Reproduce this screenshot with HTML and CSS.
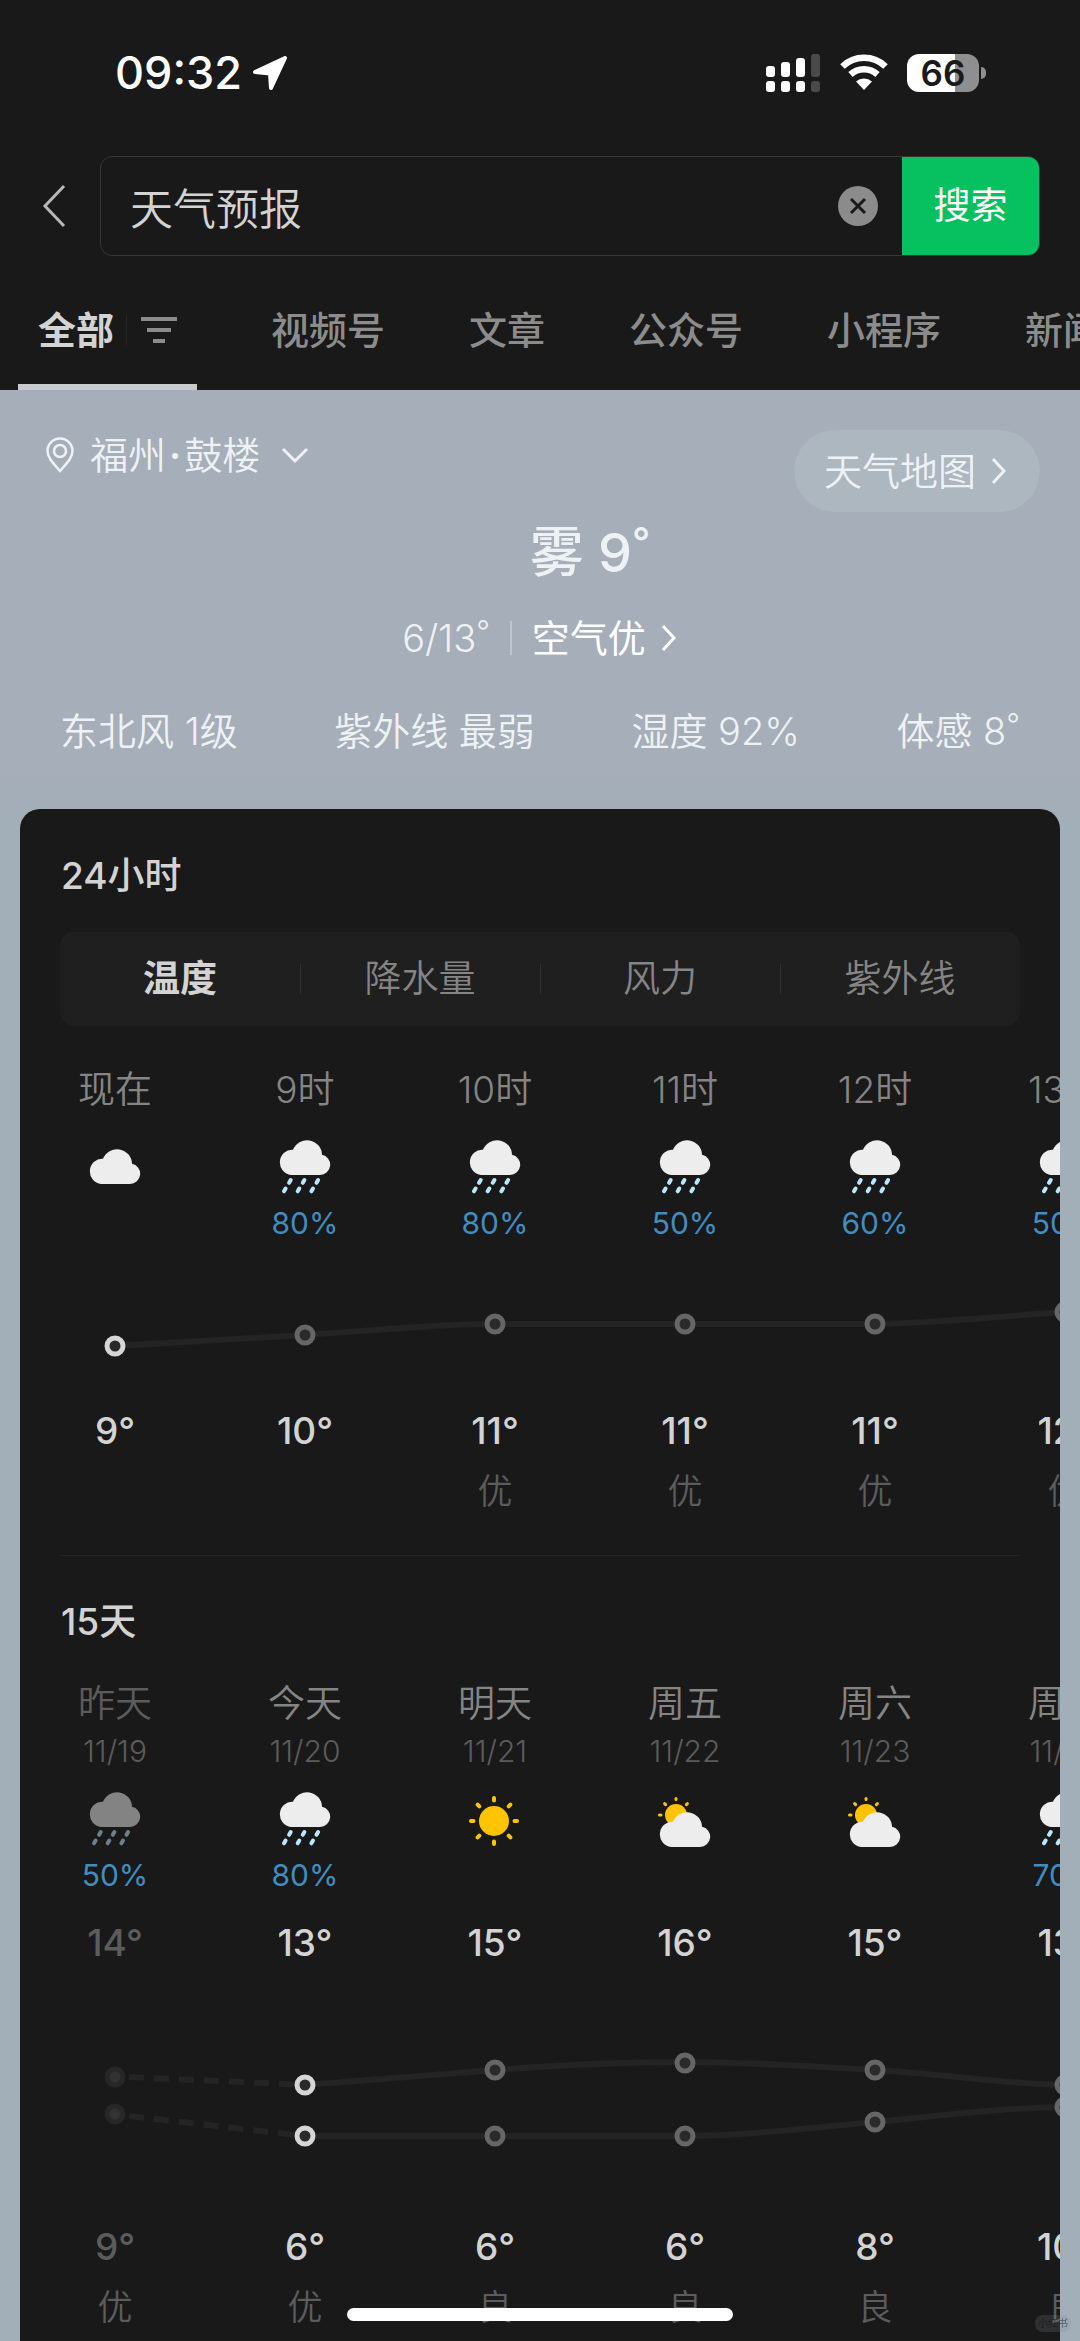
FILE: index.html
```html
<!DOCTYPE html>
<html lang="zh-CN">
<head>
<meta charset="utf-8">
<meta name="viewport" content="width=device-width, initial-scale=1">
<title>天气预报</title>
<link rel="stylesheet" href="styles.css">
</head>
<body>
<svg class="sprite" aria-hidden="true">
  <symbol id="cloud" viewBox="0 0 52 36">
    <path d="M12 36A12 12.500 0 1 1 14 10.800A15 15 0 0 1 43 15.800A10.200 10.200 0 0 1 41 36Z"/>
  </symbol>
  <symbol id="w-cloud" viewBox="0 0 60 68">
    <use href="#cloud" x="4" y="16" width="52" height="36" fill="#ededed"/>
  </symbol>
  <symbol id="w-rain" viewBox="0 0 60 68">
    <use href="#cloud" x="4" y="7" width="52" height="36" fill="#ededed"/>
    <path d="M15.700 48l-1.600 2.800M29.400 48l-1.600 2.800M43.100 48l-1.600 2.800M10.600 56.500l-1.600 2.800M24.300 56.500l-1.600 2.800M38 56.500l-1.600 2.800" stroke="#b8e8fc" stroke-width="4" stroke-linecap="round" fill="none"/>
  </symbol>
  <symbol id="w-sun" viewBox="0 0 60 68">
    <circle cx="29" cy="37" r="15" fill="#ffc300"/>
    <path d="M29 14v2.500M29 57.500v2.500M6 37h2.500M49.500 37h2.500M12.600 20.600l1.700 1.700M43.700 51.700l1.700 1.700M45.400 20.600l-1.700 1.700M14.300 51.700l-1.700 1.700" stroke="#ffc300" stroke-width="4" stroke-linecap="round"/>
  </symbol>
  <symbol id="w-partly" viewBox="0 0 60 68">
    <circle cx="21" cy="31" r="11" fill="#ffc300"/>
    <path d="M21 14.500v1M4.500 31h1.500M9.600 19.600l1 1M32.400 19.600l-1 1" stroke="#ffc300" stroke-width="3" stroke-linecap="round"/>
    <use href="#cloud" x="4" y="27" width="52" height="36" fill="#ededed"/>
  </symbol>
  <symbol id="chev-right" viewBox="0 0 18 30">
    <path d="M3 3l11 12L3 27" fill="none" stroke="currentColor" stroke-width="3"/>
  </symbol>
</svg>

<header class="top">
  <div class="status">
    <div class="status-left">
      <time>09:32</time>
      <svg width="36" height="36" viewBox="0 0 36 36" aria-hidden="true"><path d="M33 3L19 33L18 18.500L3 17Z" fill="#fff" stroke="#fff" stroke-width="4" stroke-linejoin="round"/></svg>
    </div>
    <div class="status-right">
      <svg width="56" height="40" viewBox="0 0 56 40" aria-hidden="true">
        <g fill="#fff"><rect x="1" y="13" width="9" height="11" rx="3"/><rect x="16" y="9" width="9" height="15" rx="3"/><rect x="31" y="5" width="9" height="19" rx="3"/><rect x="1" y="28" width="9" height="11" rx="3"/><rect x="16" y="28" width="9" height="11" rx="3"/><rect x="31" y="28" width="9" height="11" rx="3"/></g>
        <g fill="#4a4a4a"><rect x="46" y="1" width="9" height="23" rx="3"/><rect x="46" y="28" width="9" height="11" rx="3"/></g>
      </svg>
      <svg width="50" height="38" viewBox="0 0 50 38" aria-hidden="true">
        <path d="M3.500 12.500A31 31 0 0 1 46.500 12.500" fill="none" stroke="#fff" stroke-width="6.500"/>
        <path d="M11.500 20.500A20 20 0 0 1 38.500 20.500" fill="none" stroke="#fff" stroke-width="6.500"/>
        <path d="M17 27.500A12 12 0 0 1 33 27.500L25 36Z" fill="#fff"/>
      </svg>
      <div class="battery"><span class="battery-body">66</span><span class="battery-cap"></span></div>
    </div>
  </div>

  <form class="search">
    <button class="back" type="button" aria-label="返回"><svg width="26" height="46" viewBox="0 0 26 46" aria-hidden="true"><path d="M23 3L4 23l19 20" fill="none" stroke="#b8b8b8" stroke-width="3"/></svg></button>
    <div class="search-box">
      <input type="text" value="天气预报" aria-label="搜索内容">
      <button class="clear" type="button" aria-label="清除"><svg width="40" height="40" viewBox="0 0 40 40" aria-hidden="true"><circle cx="20" cy="20" r="20" fill="#8b8b8b"/><path d="M13 13l14 14M27 13L13 27" stroke="#191919" stroke-width="3"/></svg></button>
      <button class="submit" type="submit">搜索</button>
    </div>
  </form>

  <nav class="tabs">
    <a class="tab active" href="#all">全部<span class="tab-rule"></span><svg width="36" height="28" viewBox="0 0 36 28" aria-hidden="true"><path d="M0 3h36M6 14h24M12 25h12" stroke="#8c8c8c" stroke-width="4"/></svg></a>
    <a class="tab" href="#video">视频号</a>
    <a class="tab" href="#article">文章</a>
    <a class="tab" href="#account">公众号</a>
    <a class="tab" href="#mini">小程序</a>
    <a class="tab" href="#news">新闻</a>
  </nav>
</header>

<main class="weather">
  <div class="place-row">
    <button class="place" type="button">
      <svg width="28" height="36" viewBox="0 0 28 36" aria-hidden="true"><path d="M14 34C8 27 1.500 21 1.500 14a12.500 12.500 0 0 1 25 0C26.500 21 20 27 14 34Z" fill="none" stroke="currentColor" stroke-width="2.500"/><circle cx="14" cy="14" r="6" fill="none" stroke="currentColor" stroke-width="2.500"/></svg>
      <span>福州<span class="mid-dot">·</span>鼓楼</span>
      <svg width="28" height="18" viewBox="0 0 28 18" aria-hidden="true"><path d="M2 3l12 12L26 3" fill="none" stroke="currentColor" stroke-width="3"/></svg>
    </button>
    <a class="map" href="#map">天气地图<svg width="18" height="30" aria-hidden="true"><use href="#chev-right"/></svg></a>
  </div>
  <h1 class="now">雾 9<sup>°</sup></h1>
  <p class="summary"><span class="range">6/13<sup>°</sup></span><span class="bar"></span><a class="air" href="#air">空气优<svg width="18" height="30" aria-hidden="true"><use href="#chev-right"/></svg></a></p>
  <ul class="stats"><li>东北风 1级</li><li>紫外线 最弱</li><li>湿度 92%</li><li>体感 8<sup>°</sup></li></ul>

  <div class="card">
    <section class="hourly">
      <h2>24小时</h2>
      <div class="segments">
        <button class="segment on" type="button">温度</button>
        <button class="segment" type="button">降水量</button>
        <button class="segment" type="button">风力</button>
        <button class="segment" type="button">紫外线</button>
      </div>
      <div class="strip">
        <ul class="cols">
          <li><span class="label">现在</span><svg class="icon"><use href="#w-cloud"/></svg><span class="rain"></span></li>
          <li><span class="label">9时</span><svg class="icon"><use href="#w-rain"/></svg><span class="rain">80%</span></li>
          <li><span class="label">10时</span><svg class="icon"><use href="#w-rain"/></svg><span class="rain">80%</span></li>
          <li><span class="label">11时</span><svg class="icon"><use href="#w-rain"/></svg><span class="rain">50%</span></li>
          <li><span class="label">12时</span><svg class="icon"><use href="#w-rain"/></svg><span class="rain">60%</span></li>
          <li><span class="label">13时</span><svg class="icon"><use href="#w-rain"/></svg><span class="rain">50%</span></li>
        </ul>
        <svg class="chart" width="1140" height="160" viewBox="0 0 1140 160" aria-hidden="true">
          <path class="line" d="M95 100L285 89C380 82 430 78 475 78H855C900 78 960 72 1045 66"/>
          <circle class="dot now-dot" cx="95" cy="100" r="8"/><circle class="dot" cx="285" cy="89" r="8"/><circle class="dot" cx="475" cy="78" r="8"/><circle class="dot" cx="665" cy="78" r="8"/><circle class="dot" cx="855" cy="78" r="8"/><circle class="dot" cx="1045" cy="66" r="8"/>
        </svg>
        <ul class="cols">
          <li><span class="temp">9°</span><span class="air-level"></span></li>
          <li><span class="temp">10°</span><span class="air-level"></span></li>
          <li><span class="temp">11°</span><span class="air-level">优</span></li>
          <li><span class="temp">11°</span><span class="air-level">优</span></li>
          <li><span class="temp">11°</span><span class="air-level">优</span></li>
          <li><span class="temp">12°</span><span class="air-level">优</span></li>
        </ul>
      </div>
    </section>
    <hr>
    <section class="daily">
      <h2>15天</h2>
      <div class="strip">
        <ul class="cols">
          <li class="past"><span class="label">昨天</span><span class="date">11/19</span><svg class="icon"><use href="#w-rain"/></svg><span class="rain">50%</span><span class="temp">14°</span></li>
          <li><span class="label">今天</span><span class="date">11/20</span><svg class="icon"><use href="#w-rain"/></svg><span class="rain">80%</span><span class="temp">13°</span></li>
          <li><span class="label">明天</span><span class="date">11/21</span><svg class="icon"><use href="#w-sun"/></svg><span class="rain"></span><span class="temp">15°</span></li>
          <li><span class="label">周五</span><span class="date">11/22</span><svg class="icon"><use href="#w-partly"/></svg><span class="rain"></span><span class="temp">16°</span></li>
          <li><span class="label">周六</span><span class="date">11/23</span><svg class="icon"><use href="#w-partly"/></svg><span class="rain"></span><span class="temp">15°</span></li>
          <li><span class="label">周日</span><span class="date">11/24</span><svg class="icon"><use href="#w-rain"/></svg><span class="rain">70%</span><span class="temp">13°</span></li>
        </ul>
        <svg class="chart" width="1140" height="254" viewBox="0 0 1140 254" aria-hidden="true">
          <path class="line dashed" d="M109 109L285 117"/>
          <path class="line dashed" d="M109 148L285 168"/>
          <path class="line" d="M285 117C340 113 410 107 475 102S610 94 665 94S790 98 855 102S990 116 1045 117"/>
          <path class="line" d="M285 168H665C720 168 790 160 855 154S980 140 1045 139"/>
          <circle class="dot past-dot" cx="95" cy="109" r="8"/><circle class="dot now-dot" cx="285" cy="117" r="8"/><circle class="dot" cx="475" cy="102" r="8"/><circle class="dot" cx="665" cy="95" r="8"/><circle class="dot" cx="855" cy="102" r="8"/><circle class="dot" cx="1045" cy="117" r="8"/>
          <circle class="dot past-dot" cx="95" cy="146" r="8"/><circle class="dot now-dot" cx="285" cy="168" r="8"/><circle class="dot" cx="475" cy="168" r="8"/><circle class="dot" cx="665" cy="168" r="8"/><circle class="dot" cx="855" cy="154" r="8"/><circle class="dot" cx="1045" cy="139" r="8"/>
        </svg>
        <ul class="cols">
          <li class="past"><span class="temp">9°</span><span class="air-level">优</span></li>
          <li><span class="temp">6°</span><span class="air-level">优</span></li>
          <li><span class="temp">6°</span><span class="air-level">良</span></li>
          <li><span class="temp">6°</span><span class="air-level">良</span></li>
          <li><span class="temp">8°</span><span class="air-level">良</span></li>
          <li><span class="temp">10°</span><span class="air-level">良</span></li>
        </ul>
      </div>
    </section>
  </div>
</main>
<div class="home-bar"></div>
<div class="mark">小红书</div>
</body>
</html>
```
FILE: styles.css
```css
* { box-sizing: border-box; }

body {
  margin: 0;
  background: #191919;
  color: #d3d3d3;
  font-family: Inter, "Noto Sans CJK SC", sans-serif;
  font-size: 37px;
  font-weight: 350;
  line-height: 52px;
  overflow-x: hidden;
}

h1, h2, p, ul { margin: 0; padding: 0; }
ul { list-style: none; }
a { color: inherit; text-decoration: none; }
button, input {
  margin: 0;
  padding: 0;
  border: 0;
  background: none;
  color: inherit;
  font: inherit;
}
svg { display: block; flex: none; }
sup { font-size: 30px; line-height: 0; vertical-align: 10px; }
.sprite { position: absolute; width: 0; height: 0; }

/* Status bar */
.status {
  display: flex;
  justify-content: space-between;
  align-items: center;
  height: 146px;
  padding: 0 94px 0 115px;
  color: #fff;
}
.status-left, .status-right { display: flex; align-items: center; }
.status-left { gap: 10px; font-size: 45px; font-weight: 500; }
.status-right { gap: 18px; }
.battery { display: flex; align-items: center; gap: 2px; }
.battery-body {
  width: 72px;
  height: 38px;
  border-radius: 12px;
  background: linear-gradient(90deg, #fff 66%, #8f8f8f 66%);
  color: #191919;
  font-size: 35px;
  font-weight: 600;
  line-height: 38px;
  text-align: center;
}
.battery-cap { width: 5px; height: 12px; border-radius: 0 5px 5px 0; background: #8f8f8f; }

/* Search */
.search { display: flex; align-items: center; padding: 10px 40px 0 41px; }
.back { width: 59px; height: 100px; }
.search-box {
  display: flex;
  align-items: center;
  flex: 1;
  height: 100px;
  border: 1px solid #363636;
  border-radius: 12px;
  overflow: hidden;
}
.search-box input { flex: 1; min-width: 0; height: 98px; padding-left: 29px; outline: 0; font-size: 43px; }
.clear { margin-right: 24px; }
.submit { width: 137px; height: 98px; background: #07c160; color: #fff; font-weight: 400; }

/* Category tabs */
.tabs { display: flex; gap: 44px; padding-left: 18px; font-size: 38px; white-space: nowrap; overflow: hidden; }
.tab {
  display: flex;
  align-items: center;
  flex: none;
  height: 134px;
  padding: 20px 20px 0;
  border-bottom: 6px solid transparent;
  color: #8c8c8c;
  font-weight: 500;
}
.tab.active { border-color: #c9cacb; color: #d3d3d3; font-weight: 700; margin-right: 10px; }
.tab-rule { width: 1px; height: 30px; margin: 0 14px 0 12px; background: #252525; }

/* Current conditions */
.weather {
  padding: 40px 20px 0;
  background: linear-gradient(180deg, #a5aeb9 0, #a5aeb9 380px, #a2aeb8 440px);
  color: #eff2f5;
  font-size: 38px;
}
.place-row { display: flex; justify-content: space-between; align-items: flex-start; padding: 0 20px 0 26px; }
.place { display: flex; align-items: center; gap: 16px; height: 50px; }
.place svg:last-child { margin-left: 5px; }
.mid-dot { margin: 0 3px; font-weight: 600; }
.map {
  display: flex;
  align-items: center;
  gap: 14px;
  height: 82px;
  padding: 0 32px 0 30px;
  border-radius: 41px;
  background: #acb7bf;
}
.now { padding-left: 100px; font-size: 54px; font-weight: 500; line-height: 82px; text-align: center; }
.now sup { font-size: 40px; vertical-align: 16px; }
.summary { display: flex; justify-content: center; align-items: center; height: 60px; margin-top: 14px; }
.bar { width: 2px; height: 34px; margin: 0 20px; background: #bfc6ce; }
.air { display: flex; align-items: center; gap: 14px; color: #fff; font-weight: 400; }
.stats { display: flex; justify-content: space-between; padding: 0 40px; margin-top: 33px; line-height: 60px; }

/* Forecast card */
.card {
  margin-top: 48px;
  padding: 41px 0;
  border-radius: 20px 20px 0 0;
  background: #191919;
  color: #d3d3d3;
  font-size: 37px;
  overflow: hidden;
}
.card h2 { padding: 0 41px; font-size: 37px; font-weight: 500; }
.card hr { height: 1px; margin: 39px 40px 40px; border: 0; background: #232323; }
.segments { display: flex; height: 94px; margin: 30px 40px 38px; border-radius: 14px; background: #1f1f1f; }
.segment { display: flex; flex: 1; justify-content: center; align-items: center; color: #858585; position: relative; }
.segment.on { color: #d3d3d3; font-weight: 700; }
.segment + .segment::before { content: ""; position: absolute; left: 0; top: 32px; width: 1px; height: 30px; background: #303030; }

.strip { overflow: hidden; }
.daily .strip { margin-top: 30px; }
.cols { display: flex; }
.cols li { display: flex; flex: 0 0 190px; flex-direction: column; align-items: center; }
.label { color: #858585; }
.date { color: #5c5c5c; font-size: 30px; line-height: 42px; }
.icon { width: 60px; height: 68px; margin-top: 16px; }
.daily .icon { margin-top: 12px; }
.rain { height: 46px; color: #418dc0; font-size: 30px; font-weight: 400; line-height: 46px; }
.temp { font-weight: 450; line-height: 50px; }
.rain + .temp { margin-top: 20px; }
.air-level { height: 50px; margin-top: 10px; color: #5c5c5c; font-size: 35px; line-height: 50px; }
.past .label, .past .temp { color: #5c5c5c; }
.past .icon { opacity: 0.5; }

.line { fill: none; stroke: #242424; stroke-width: 6; }
.dashed { stroke-dasharray: 15 10; }
.dot { fill: #2a2a2a; stroke: #666; stroke-width: 5; }
.now-dot { stroke: #d6d6d6; }
.past-dot { fill: #323232; stroke: #272727; }

/* Overlays */
.home-bar {
  position: fixed;
  left: 50%;
  bottom: 20px;
  width: 386px;
  height: 13px;
  margin-left: -193px;
  border-radius: 7px;
  background: #fff;
}
.mark {
  position: fixed;
  right: 9px;
  bottom: 9px;
  padding: 0 3px;
  border-radius: 8px;
  background: rgba(130, 140, 148, 0.2);
  color: rgba(10, 10, 10, 0.5);
  font-size: 10px;
  line-height: 17px;
}
```
